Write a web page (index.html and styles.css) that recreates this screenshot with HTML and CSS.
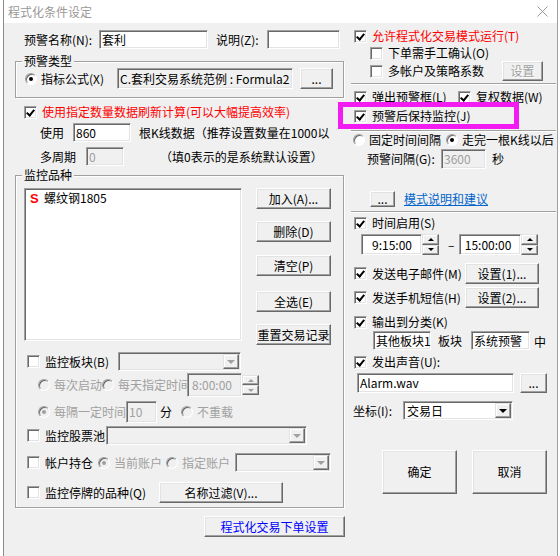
FILE: index.html
```html
<!DOCTYPE html>
<html lang="zh-CN">
<head>
  <meta charset="UTF-8" />
  <title>程式化条件设定</title>
  <link rel="stylesheet" href="styles.css">
</head>
<body>

<div class="screen">
  <div class="under-left"></div>

  <div class="dialog">
    <div class="titlebar">
      <span class="title">程式化条件设定</span>
      <svg class="close" width="11" height="11" viewBox="0 0 11 11">
        <path d="M0.5 0.5L10.5 10.5M10.5 0.5L0.5 10.5" stroke="#999" stroke-width="1" fill="none"/>
      </svg>
    </div>

    <div class="client">
      <!-- 左侧 -->
      <div class="col-left">
        <div class="row name-row">
          <span class="name-label">预警名称(N):</span>
          <span class="edit name-edit">套利</span>
          <span class="desc-label">说明(Z):</span>
          <span class="edit desc-edit"></span>
        </div>

        <fieldset class="group type-group">
          <legend>预警类型</legend>
          <div class="row type-row">
            <span class="radio on"></span>
            <span class="formula-label">指标公式(X)</span>
            <span class="edit readonly formula-edit">C.套利交易系统范例 : Formula2</span>
            <span class="btn dots-btn">...</span>
          </div>
        </fieldset>

        <div class="row refresh-row">
          <span class="check on"></span>
          <span class="red">使用指定数量数据刷新计算(可以大幅提高效率)</span>
        </div>

        <div class="row use-row">
          <span class="use-label">使用</span>
          <span class="edit bars-edit">860</span>
          <span class="bars-hint">根K线数据（推荐设置数量在1000以</span>
        </div>

        <div class="row period-row">
          <span class="period-label">多周期</span>
          <span class="edit readonly dis period-edit">0</span>
          <span class="period-hint">（填0表示的是系统默认设置）</span>
        </div>

        <fieldset class="group watch-group">
          <legend>监控品种</legend>
          <div class="watch-top">
            <div class="list">
              <div class="list-item"><span class="s-mark">S</span>螺纹钢1805</div>
            </div>
            <div class="side-buttons">
              <span class="btn">加入(A)...</span>
              <span class="btn">删除(D)</span>
              <span class="btn">清空(P)</span>
              <span class="btn">全选(E)</span>
              <span class="btn">重置交易记录</span>
            </div>
          </div>

          <div class="row block-row">
            <span class="check"></span>
            <span class="block-label">监控板块(B)</span>
            <span class="combo dis block-combo"><i class="arrow"></i></span>
          </div>

          <div class="row reload-row1 dis">
            <span class="radio dis"></span>
            <span class="each-start">每次启动</span>
            <span class="radio dis"></span>
            <span class="daily-label">每天指定时间</span>
            <span class="edit readonly time-edit load-time">8:00:00</span>
            <span class="spin dis"><i class="up"></i><i class="down"></i></span>
          </div>

          <div class="row reload-row2 dis">
            <span class="radio on dis"></span>
            <span class="every-label">每隔一定时间</span>
            <span class="edit readonly minute-edit">10</span>
            <span class="minute-unit">分</span>
            <span class="radio dis"></span>
            <span>不重载</span>
          </div>

          <div class="row pool-row">
            <span class="check"></span>
            <span class="pool-label">监控股票池</span>
            <span class="combo dis pool-combo"><i class="arrow"></i></span>
          </div>

          <div class="row account-row">
            <span class="check"></span>
            <span class="account-label">帐户持仓</span>
            <span class="radio on dis"></span>
            <span class="dis acc-text">当前账户</span>
            <span class="radio dis"></span>
            <span class="dis acc-text2">指定账户</span>
            <span class="combo dis account-combo"><i class="arrow"></i></span>
          </div>

          <div class="row halt-row">
            <span class="check"></span>
            <span class="halt-label">监控停牌的品种(Q)</span>
            <span class="btn filter-btn">名称过滤(V)...</span>
          </div>
        </fieldset>

        <span class="btn order-btn">程式化交易下单设置</span>
      </div>

      <!-- 右侧 -->
      <div class="col-right">
        <div class="row allow-row">
          <span class="check on"></span>
          <span class="red">允许程式化交易模式运行(T)</span>
        </div>
        <div class="row confirm-row">
          <span class="check"></span>
          <span>下单需手工确认(O)</span>
        </div>
        <div class="row multi-row">
          <span class="check"></span>
          <span class="multi-label">多帐户及策略系数</span>
          <span class="btn dis set-btn">设置</span>
        </div>

        <div class="sep"></div>

        <div class="row popup-row">
          <span class="check on"></span>
          <span class="popup-label">弹出预警框(L)</span>
          <span class="check on"></span>
          <span>复权数据(W)</span>
        </div>
        <div class="row keep-row">
          <span class="check on"></span>
          <span>预警后保持监控(J)</span>
          <span class="mark"></span>
        </div>

        <div class="sep sep-keep"></div>

        <div class="row mode-row">
          <span class="radio"></span>
          <span class="fixed-label">固定时间间隔</span>
          <span class="radio on"></span>
          <span>走完一根K线以后</span>
        </div>
        <div class="row interval-row">
          <span class="interval-label">预警间隔(G):</span>
          <span class="edit readonly dis interval-edit">3600</span>
          <span class="sec">秒</span>
        </div>
        <div class="row guide-row">
          <span class="btn guide-btn">...</span>
          <span class="link">模式说明和建议</span>
        </div>

        <div class="sep"></div>

        <div class="row time-on-row">
          <span class="check on"></span>
          <span>时间启用(S)</span>
        </div>
        <div class="row time-row">
          <span class="edit time-edit t1">9:15:00</span>
          <span class="spin"><i class="up"></i><i class="down"></i></span>
          <span class="dash">–</span>
          <span class="edit time-edit t2">15:00:00</span>
          <span class="spin"><i class="up"></i><i class="down"></i></span>
        </div>
        <div class="row mail-row">
          <span class="check on"></span>
          <span class="send-label">发送电子邮件(M)</span>
          <span class="btn send-btn">设置(1)...</span>
        </div>
        <div class="row sms-row">
          <span class="check on"></span>
          <span class="send-label">发送手机短信(H)</span>
          <span class="btn send-btn">设置(2)...</span>
        </div>
        <div class="row output-row">
          <span class="check on"></span>
          <span>输出到分类(K)</span>
        </div>
        <div class="row target-row">
          <span class="edit target-edit">其他板块1</span>
          <span class="board">板块</span>
          <span class="edit target-edit2">系统预警</span>
          <span class="zhong">中</span>
        </div>
        <div class="row sound-row">
          <span class="check on"></span>
          <span>发出声音(U):</span>
        </div>
        <div class="row file-row">
          <span class="edit file-edit">Alarm.wav</span>
          <span class="btn file-btn">...</span>
        </div>
        <div class="row axis-row">
          <span class="axis-label">坐标(I):</span>
          <span class="combo axis-combo">交易日<i class="arrow"></i></span>
        </div>
        <div class="row dialog-buttons">
          <span class="btn big-btn">确定</span>
          <span class="btn big-btn">取消</span>
        </div>
      </div>
    </div>
  </div>

  <div class="under-right"></div>
</div>

</body>
</html>
```

FILE: styles.css
```css
body {
  margin: 0;
  font-family: "Noto Sans CJK SC", sans-serif;
  font-size: 12px;
  line-height: 14px;
  color: #000;
  background: #fff;
}
.screen {
  display: flex;
  width: 560px;
  height: 556px;
  overflow: hidden;
}
.under-left {
  width: 3px;
  flex: none;
  background: #fff;
  border-right: 1px solid #8c8c8c;
}
.under-right {
  flex: 1;
  background: #fff;
  border-left: 1px solid #a0a0a0;
}
.dialog {
  width: 553px;
  flex: none;
  background: #f0f0f0;
  display: flex;
  flex-direction: column;
}
.titlebar {
  height: 23px;
  flex: none;
  background: #fff;
  display: flex;
  align-items: center;
  justify-content: space-between;
  padding: 0 9px 0 4px;
}
.title {
  color: #999;
}
.client {
  display: flex;
  gap: 7px;
  padding-left: 11px;
}
.col-left {
  width: 329px;
  flex: none;
  display: flex;
  flex-direction: column;
}
.col-right {
  width: 205px;
  flex: none;
  display: flex;
  flex-direction: column;
}

/* 通用控件 */
.row {
  display: flex;
  align-items: center;
  flex: none;
  white-space: nowrap;
}
.row > span {
  flex: none;
}
.red {
  color: #f00;
}
.dis {
  color: #a0a0a0;
}
.check {
  position: relative;
  width: 13px;
  height: 13px;
  box-sizing: border-box;
  border: 1px solid;
  border-color: #a0a0a0 #fff #fff #a0a0a0;
  box-shadow: inset 1px 1px #696969, inset -1px -1px #e3e3e3;
  background: #fff;
}
.check.on::after {
  content: "";
  position: absolute;
  left: 3px;
  top: 1px;
  width: 3px;
  height: 6px;
  border: solid #000;
  border-width: 0 2px 2px 0;
  transform: rotate(40deg);
}
.check + span {
  margin-left: 5px;
}
.radio {
  position: relative;
  width: 12px;
  height: 12px;
  box-sizing: border-box;
  border-radius: 50%;
  border: 1px solid;
  border-color: #a0a0a0 #fff #fff #a0a0a0;
  box-shadow: inset 1px 1px #696969;
  background: #fff;
}
.radio.dis {
  background: #f0f0f0;
}
.radio.on::after {
  content: "";
  position: absolute;
  left: 3px;
  top: 3px;
  width: 4px;
  height: 4px;
  border-radius: 50%;
  background: #000;
}
.radio.on.dis::after {
  background: #a0a0a0;
}
.radio + span {
  margin-left: 4px;
}
.edit {
  align-self: stretch;
  box-sizing: border-box;
  display: flex;
  align-items: center;
  padding: 0 2px;
  border: 1px solid;
  border-color: #a0a0a0 #fff #fff #a0a0a0;
  box-shadow: inset 1px 1px #696969, inset -1px -1px #e3e3e3;
  background: #fff;
  white-space: nowrap;
}
.edit.readonly {
  background: #f0f0f0;
}
.btn {
  box-sizing: border-box;
  display: flex;
  align-items: center;
  justify-content: center;
  height: 21px;
  border: 1px solid;
  border-color: #fff #696969 #696969 #fff;
  box-shadow: inset -1px -1px #a0a0a0, inset 1px 1px #e3e3e3;
  background: #f0f0f0;
  white-space: nowrap;
}
.row > .btn {
  align-self: stretch;
  height: auto;
}
.btn.dis {
  color: #a0a0a0;
  text-shadow: 1px 1px #fff;
}
.combo {
  align-self: stretch;
  box-sizing: border-box;
  display: flex;
  align-items: center;
  padding: 1px 1px 1px 3px;
  border: 1px solid;
  border-color: #a0a0a0 #fff #fff #a0a0a0;
  box-shadow: inset 1px 1px #696969, inset -1px -1px #e3e3e3;
  background: #fff;
}
.combo.dis {
  background: #f0f0f0;
}
.arrow {
  margin-left: auto;
  width: 16px;
  align-self: stretch;
  box-sizing: border-box;
  display: flex;
  align-items: center;
  justify-content: center;
  border: 1px solid;
  border-color: #e3e3e3 #696969 #696969 #e3e3e3;
  box-shadow: inset -1px -1px #a0a0a0, inset 1px 1px #fff;
  background: #f0f0f0;
}
.arrow::after {
  content: "";
  border-left: 4px solid transparent;
  border-right: 4px solid transparent;
  border-top: 4px solid #000;
}
.combo.dis .arrow::after {
  border-top-color: #a0a0a0;
}
.spin {
  width: 17px;
  align-self: stretch;
  display: flex;
  flex-direction: column;
}
.spin i {
  flex: 1;
  box-sizing: border-box;
  display: flex;
  align-items: center;
  justify-content: center;
  border: 1px solid;
  border-color: #e3e3e3 #696969 #696969 #e3e3e3;
  box-shadow: inset -1px -1px #a0a0a0, inset 1px 1px #fff;
  background: #f0f0f0;
}
.spin .up::after {
  content: "";
  border-left: 3px solid transparent;
  border-right: 3px solid transparent;
  border-bottom: 3px solid #000;
}
.spin .down::after {
  content: "";
  border-left: 3px solid transparent;
  border-right: 3px solid transparent;
  border-top: 3px solid #000;
}
.spin.dis .up::after {
  border-bottom-color: #a0a0a0;
}
.spin.dis .down::after {
  border-top-color: #a0a0a0;
}
.group {
  margin: 0;
  padding: 0;
  width: 329px;
  box-sizing: border-box;
  min-width: 0;
  border: 1px solid #a0a0a0;
  box-shadow: inset 1px 1px #fff, 1px 1px #fff;
}
.group legend {
  margin-left: 6px;
  padding: 0 2px;
  line-height: 14px;
  background: #f0f0f0;
}
.sep {
  flex: none;
  height: 0;
  border-top: 1px solid #a0a0a0;
  border-bottom: 1px solid #fff;
}

/* 左侧各行 */
.name-row {
  margin-top: 7px;
  height: 19px;
  padding-left: 9px;
}
.name-label { width: 75px; }
.name-edit { width: 109px; }
.desc-label { width: 51px; margin-left: 8px; }
.desc-edit { width: 73px; }

.type-group {
  margin-top: 5px;
  padding-bottom: 8px;
}
.type-row {
  height: 21px;
  padding-left: 9px;
}
.formula-label { width: 76px; }
.formula-edit { width: 176px; overflow: hidden; }
.dots-btn { width: 33px; margin-left: 7px; }

.refresh-row {
  margin-top: 6px;
  height: 16px;
  padding-left: 9px;
}
.use-row {
  margin-top: 3px;
  height: 19px;
  padding-left: 25px;
}
.use-label { width: 33px; }
.bars-edit { width: 58px; }
.bars-hint { width: 191px; margin-left: 8px; }
.period-row {
  margin-top: 5px;
  height: 19px;
  padding-left: 25px;
}
.period-label { width: 46px; }
.period-edit { width: 38px; }
.period-hint { margin-left: 36px; }

.watch-group {
  margin-top: 2px;
  padding-bottom: 4px;
}
.watch-top {
  display: flex;
  margin-top: 6px;
  padding-left: 8px;
}
.list {
  width: 218px;
  height: 153px;
  box-sizing: border-box;
  padding: 1px 0 0 5px;
  border: 1px solid;
  border-color: #a0a0a0 #fff #fff #a0a0a0;
  box-shadow: inset 1px 1px #696969, inset -1px -1px #e3e3e3;
  background: #fff;
}
.list-item {
  display: flex;
  align-items: center;
  height: 16px;
}
.s-mark {
  width: 8px;
  margin-right: 6px;
  color: #f00;
  font: bold 13px "Liberation Sans", sans-serif;
}
.side-buttons {
  display: flex;
  flex-direction: column;
  width: 75px;
  margin-left: 14px;
}
.side-buttons .btn:nth-child(2) { margin-top: 12px; }
.side-buttons .btn:nth-child(3) { margin-top: 13px; }
.side-buttons .btn:nth-child(4) { margin-top: 15px; }
.side-buttons .btn:nth-child(5) { margin-top: 12px; }

.block-row {
  margin-top: 7px;
  height: 19px;
  padding-left: 11px;
}
.block-label { width: 73px; }
.block-combo { width: 123px; }
.reload-row1 {
  margin-top: 2px;
  height: 24px;
  padding-left: 22px;
}
.each-start { width: 48px; }
.reload-row1 .radio:nth-of-type(2) { margin-left: 5px; }
.daily-label { width: 69px; overflow: hidden; }
.load-time {
  width: 55px;
  justify-content: flex-end;
  padding-right: 4px;
}
.reload-row1 .spin {
  align-self: center;
  height: 20px;
}
.reload-row2 {
  margin-top: 4px;
  height: 22px;
  padding-left: 22px;
}
.every-label { width: 72px; }
.minute-edit { width: 31px; }
.minute-unit { margin-left: 3px; color: #000; }
.reload-row2 .minute-unit + .radio { margin-left: 9px; }
.pool-row {
  margin-top: 3px;
  height: 19px;
  padding-left: 11px;
}
.pool-label { width: 61px; }
.pool-combo { width: 201px; }
.account-row {
  margin-top: 8px;
  height: 19px;
  padding-left: 11px;
}
.account-label { width: 53px; }
.acc-text { width: 48px; }
.account-row .acc-text + .radio { margin-left: 4px; }
.acc-text2 { width: 49px; }
.account-combo { width: 96px; margin-left: 4px; }
.halt-row {
  margin-top: 10px;
  height: 21px;
  padding-left: 11px;
}
.halt-label { width: 114px; }
.filter-btn { width: 124px; }
.order-btn {
  margin-top: 8px;
  margin-left: 189px;
  width: 141px;
  color: #00f;
}

/* 右侧各行 */
.allow-row {
  margin-top: 5px;
  height: 16px;
  padding-left: 3px;
}
.confirm-row {
  margin-top: 1px;
  height: 16px;
  padding-left: 19px;
}
.multi-row {
  height: 20px;
  padding-left: 19px;
}
.multi-label { width: 114px; }
.set-btn { width: 41px; }
.multi-row + .sep { margin-top: 2px; }
.popup-row {
  margin-top: 4px;
  height: 16px;
  padding-left: 3px;
}
.popup-label { width: 81px; margin-right: 5px; }
.keep-row {
  position: relative;
  margin-top: 3px;
  height: 16px;
  padding-left: 3px;
}
.keep-row .mark {
  position: absolute;
  left: -13px;
  top: -6px;
  width: 181px;
  height: 27px;
  box-sizing: border-box;
  border: 5px solid #f21cf2;
}
.sep-keep { margin-top: 6px; }
.mode-row {
  margin-top: 1px;
  height: 14px;
  padding-left: 2px;
}
.fixed-label { width: 72px; margin-right: 5px; }
.interval-row {
  margin-top: 2px;
  height: 20px;
  padding-left: 16px;
}
.interval-label { width: 74px; }
.interval-edit { width: 45px; }
.sec { margin-left: 6px; }
.guide-row {
  margin-top: 22px;
  height: 16px;
  padding-left: 19px;
}
.guide-btn { width: 25px; }
.link {
  margin-left: 9px;
  color: #0066cc;
  text-decoration: underline;
}
.guide-row + .sep { margin-top: 4px; }
.time-on-row {
  margin-top: 2px;
  height: 16px;
  padding-left: 3px;
}
.time-row {
  margin-top: 3px;
  height: 21px;
  padding-left: 10px;
}
.time-edit {
  justify-content: flex-end;
  padding-right: 9px;
}
.t1 { width: 61px; }
.t2 { width: 62px; }
.dash { margin: 0 5px 0 9px; }
.mail-row {
  margin-top: 8px;
  height: 21px;
  padding-left: 3px;
}
.sms-row {
  margin-top: 3px;
  height: 21px;
  padding-left: 3px;
}
.send-label { width: 93px; }
.send-btn { width: 74px; }
.output-row {
  margin-top: 6px;
  height: 16px;
  padding-left: 3px;
}
.target-row {
  margin-top: 1px;
  height: 19px;
  padding-left: 22px;
}
.target-edit { width: 58px; }
.board { margin-left: 7px; }
.target-edit2 { width: 59px; margin-left: 9px; }
.zhong { margin-left: 4px; padding-top: 3px; }
.sound-row {
  margin-top: 4px;
  height: 16px;
  padding-left: 3px;
}
.file-row {
  margin-top: 3px;
  height: 20px;
  padding-left: 6px;
}
.file-edit { width: 157px; }
.file-btn { width: 27px; margin-left: 6px; }
.axis-row {
  margin-top: 8px;
  height: 19px;
  padding-left: 2px;
}
.axis-label { width: 50px; }
.axis-combo { width: 110px; }
.dialog-buttons {
  margin-top: 30px;
  height: 44px;
  padding-left: 31px;
}
.big-btn { width: 75px; }
.big-btn + .big-btn { margin-left: 15px; }
```
